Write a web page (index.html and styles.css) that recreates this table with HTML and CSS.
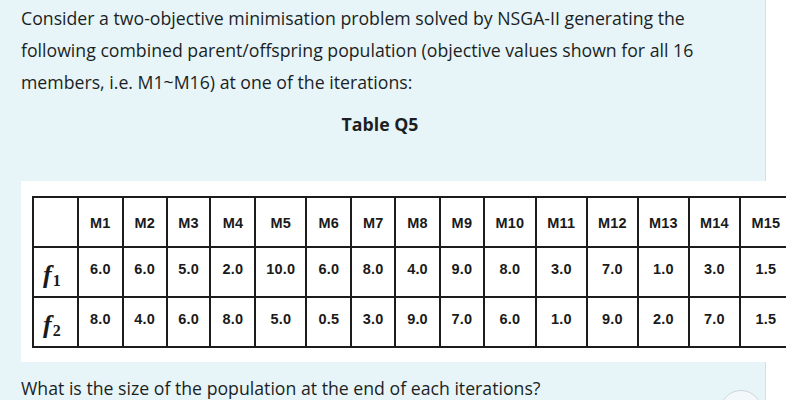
FILE: index.html
```html
<!DOCTYPE html>
<html lang="en">
<head>
<meta charset="utf-8">
<title>Question</title>
<link rel="stylesheet" href="styles.css">
</head>
<body>
<div class="page">
  <section class="panel">
    <p class="intro">Consider a two-objective minimisation problem solved by NSGA-II generating the following combined parent/offspring population (objective values shown for all 16 members, i.e. M1~M16) at one of the iterations:</p>
    <p class="caption">Table Q5</p>
    <figure class="figure">
      <table class="data">
        <colgroup>
          <col class="c44"><col class="c44"><col class="c43"><col class="c43"><col class="c44"><col class="c50"><col class="c44"><col class="c43"><col class="c44"><col class="c43"><col class="c51"><col class="c50"><col class="c50"><col class="c50"><col class="c50"><col class="c51"><col class="c51">
        </colgroup>
        <tr class="head">
          <td></td><td>M1</td><td>M2</td><td>M3</td><td>M4</td><td>M5</td><td>M6</td><td>M7</td><td>M8</td><td>M9</td><td>M10</td><td>M11</td><td>M12</td><td>M13</td><td>M14</td><td>M15</td><td></td>
        </tr>
        <tr class="row">
          <td class="lab"><span class="f">f</span><span class="sub">1</span></td><td>6.0</td><td>6.0</td><td>5.0</td><td>2.0</td><td>10.0</td><td>6.0</td><td>8.0</td><td>4.0</td><td>9.0</td><td>8.0</td><td>3.0</td><td>7.0</td><td>1.0</td><td>3.0</td><td>1.5</td><td></td>
        </tr>
        <tr class="row">
          <td class="lab"><span class="f">f</span><span class="sub">2</span></td><td>8.0</td><td>4.0</td><td>6.0</td><td>8.0</td><td>5.0</td><td>0.5</td><td>3.0</td><td>9.0</td><td>7.0</td><td>6.0</td><td>1.0</td><td>9.0</td><td>2.0</td><td>7.0</td><td>1.5</td><td></td>
        </tr>
      </table>
    </figure>
    <p class="question">What is the size of the population at the end of each iterations?</p>
    <span class="fab"></span>
  </section>
</div>
</body>
</html>
```
FILE: styles.css
```css
html, body {
  margin: 0;
  padding: 0;
  overflow: hidden;
  background: #ffffff;
}
.page {
  width: 786px;
  height: 400px;
  overflow: hidden;
}
.panel {
  position: relative;
  box-sizing: border-box;
  width: 766px;
  height: 400px;
  padding: 2px 0 0 21px;
  background: #e7f5f8;
  border-right: 1px solid #c6e3ea;
  font-family: "Open Sans", "Noto Sans", sans-serif;
  font-size: 17.7px;
  line-height: 32px;
  color: #1b1f24;
}
.intro {
  margin: 0;
  width: 700px;
}
.caption {
  margin: 10px 0 0;
  text-align: center;
  font-weight: bold;
  width: 718px;
}
.figure {
  margin: 41px 0 0;
  box-sizing: border-box;
  width: 765px;
  height: 181px;
  padding: 15px 0 0 11px;
  background: #ffffff;
  overflow: hidden;
}
.data {
  border-collapse: collapse;
  table-layout: fixed;
  width: 813px;
  font-family: "Liberation Sans", Arial, sans-serif;
  font-weight: bold;
  font-size: 14.5px;
  line-height: 17px;
  letter-spacing: 0.2px;
  color: #1a1a1a;
}
.c43 { width: 43px; }
.c44 { width: 44px; }
.c50 { width: 50px; }
.c51 { width: 51px; }
.data tr {
  height: 50px;
}
.data td {
  border: 2px solid #1c1c1c;
  text-align: center;
}
.head td {
  padding: 3px 0 0;
  vertical-align: middle;
}
.row td {
  padding: 13px 0 0;
  vertical-align: top;
}
.data td.lab {
  text-align: left;
  vertical-align: bottom;
  padding: 0 0 3px 9px;
  font-family: "Liberation Serif", "Times New Roman", serif;
  letter-spacing: 0;
  line-height: 30px;
}
.f {
  font-style: italic;
  font-size: 26px;
  font-weight: bold;
}
.sub {
  font-size: 16px;
  margin-left: 1px;
  position: relative;
  top: 3px;
}
.question {
  margin: 10px 0 0;
}
.fab {
  position: absolute;
  left: 720px;
  top: 390px;
  width: 40px;
  height: 40px;
  border-radius: 50%;
  background: #f3f9fa;
  border: 1px solid #cfd6d8;
}
```
